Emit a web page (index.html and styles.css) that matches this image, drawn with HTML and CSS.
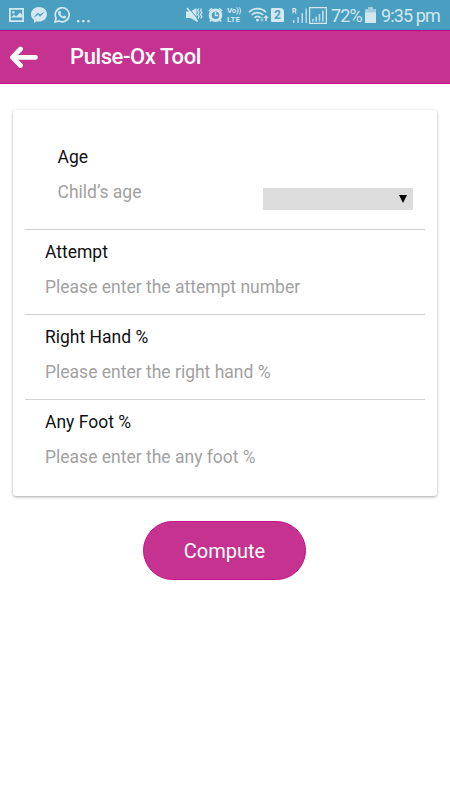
FILE: index.html
```html
<!DOCTYPE html>
<html lang="en">
	<head>
		<meta charset="UTF-8">
		<title>Pulse-Ox Tool</title>
		<link rel="stylesheet" href="styles.css">
	</head>
	<body>
		<div class="status">
			<div class="status-left">
				<svg width="15" height="14" viewBox="0 0 15 14"><path fill="currentColor" fill-rule="evenodd" d="M0 0h15v14H0zM1.8 1.800v10.400h11.400V1.800z"/><path fill="currentColor" d="M2 9.500l3-3 2 2 4-4 2.500 2.500V9.500z"/><circle cx="4.3" cy="4.2" r="1.3" fill="currentColor"/></svg>
				<svg width="16" height="16" viewBox="0 0 16 16"><path fill="currentColor" d="M8 0c4.500 0 8 3.200 8 7.300s-3.500 7.300-8 7.300c-.8 0-1.600-.1-2.300-.3L3 15.800V13C1.200 11.700 0 9.600 0 7.300 0 3.200 3.500 0 8 0z"/><path d="M3.500 9.700L7 6l2 2 3.500-2.500L9.200 9.300l-2.100-2z" fill="#4a9ebf" stroke="#4a9ebf" stroke-width=".7"/></svg>
				<svg width="16" height="16" viewBox="0 0 16 16"><path fill="none" stroke="currentColor" stroke-width="1.700" d="M1 15l1.100-3.800A7 7 0 1 1 5 14z"/><path fill="currentColor" d="M5 4l1.300-.1.900 2.100-.8 1.100c.6 1.100 1.400 1.800 2.600 2.400l1.100-1.100 2 1c0 1.500-1.200 2.300-2.500 2.100C6.800 11 4.500 8.700 4 6.300 3.900 5.300 4.300 4.500 5 4z"/></svg>
				<svg class="dots" width="13" height="3" viewBox="0 0 13 3"><path fill="currentColor" d="M0 0h2.300v2.300H0zM5.200 0h2.300v2.300H5.200zM10.400 0h2.300v2.300h-2.300z"/></svg>
			</div>
			<div class="status-right">
				<svg width="17" height="16" viewBox="0 0 17 16"><path fill="currentColor" d="M0 4.500h4.500l6-3.500v13.500l-6-3.500H0z"/><path d="M2 .2l11 13" stroke="#4a9ebf" stroke-width="1"/><path d="M1 1l10.500 13.500" fill="none" stroke="currentColor" stroke-width="1.600"/><path d="M12.700 1.500l-1 2 1.300 2-1.300 2 1.300 2-1 2M15.500 1.500l-1 2 1.300 2-1.300 2 1.300 2-1 2" fill="none" stroke="currentColor" stroke-width="1.300"/></svg>
				<svg class="alarm" width="15" height="16" viewBox="0 0 15 16"><circle cx="7.500" cy="8.200" r="5.300" fill="none" stroke="currentColor" stroke-width="3"/><path d="M.8 4L4 1.200M14.200 4L11 1.200M3.500 12.500l-1.700 2M11.500 12.500l1.700 2M7.500 4.700V8.500h2.800" fill="none" stroke="currentColor" stroke-width="1.500"/></svg>
				<div class="volte"><span class="vo">Vo))</span><span>LTE</span></div>
				<svg class="wifi" width="21" height="16" viewBox="0 0 21 16"><path d="M1 5.200c4.700-4.800 12.300-4.800 17 0M3.700 8c3.300-3.200 8.300-3.200 11.600 0M6.500 10.700c1.800-1.600 4.200-1.600 6 0" fill="none" stroke="currentColor" stroke-width="1.700"/><circle cx="9.500" cy="13.200" r="1.400" fill="currentColor"/><path fill="currentColor" d="M18 8l2.700 3h-1.900v3h-1.600v-3h-1.900z"/><path fill="currentColor" opacity=".6" d="M14 15l-2-2.500h1.300V10h1.400v2.500H16z"/></svg>
				<div class="sim">2</div>
				<svg class="roaming" width="16" height="16" viewBox="0 0 16 16"><path d="M1 6.500V1.600h1.700a1.200 1.200 0 0 1 0 2.500H1M2.700 4l1.500 2.500" fill="none" stroke="currentColor" stroke-width="1.200"/><path fill="currentColor" opacity=".8" d="M1 13h1.500v3H1zM5.300 10h1.500v6H5.300zM9.500 6H11v10H9.500zM13.500 1.500H15V16h-1.500z"/></svg>
				<svg class="signal" width="18" height="17" viewBox="0 0 18 17"><path d="M.6.600h16.800v15.800H.6z" fill="none" stroke="currentColor" stroke-width="1.200"/><path fill="currentColor" opacity=".8" d="M3 12h1.700v2.500H3zM6.300 9.800H8v4.700H6.300zM9.600 7h1.700v7.500H9.600zM13 3.500h1.700v11H13z"/></svg>
				<span class="percent">72%</span>
				<svg class="battery" width="11" height="16" viewBox="0 0 11 16"><path fill="currentColor" opacity=".65" d="M3 0h5v2h3v4H0V2h3z"/><path fill="currentColor" d="M0 5.500h11V16H0z"/></svg>
				<span class="clock">9:35 pm</span>
			</div>
		</div>
		<div class="header">
			<svg width="29" height="23" viewBox="0 0 29 23"><path d="M10.500 3L2.500 11.300l8 8.200M3.500 11.300H25.500" fill="none" stroke="#fff" stroke-width="4.800" stroke-linecap="round" stroke-linejoin="round"/></svg>
			<h1>Pulse-Ox Tool</h1>
		</div>
		<div class="card">
			<div class="row age">
				<div>
					<div class="label">Age</div>
					<div class="hint">Child’s age</div>
				</div>
				<div class="select"><svg width="8" height="8" viewBox="0 0 8 8"><path d="M0 0h8L4 8z"/></svg></div>
			</div>
			<div class="row">
				<div class="label">Attempt</div>
				<div class="hint">Please enter the attempt number</div>
			</div>
			<div class="row">
				<div class="label">Right Hand %</div>
				<div class="hint">Please enter the right hand %</div>
			</div>
			<div class="row">
				<div class="label">Any Foot %</div>
				<div class="hint">Please enter the any foot %</div>
			</div>
		</div>
		<button class="compute">Compute</button>
	</body>
</html>
```

FILE: styles.css
```css
* {
box-sizing: border-box;
}
body {
margin: 0;
font-family: Roboto, "Liberation Sans", sans-serif;
background-color: #fff;
}
svg {
display: block;
flex: none;
}
.status {
display: flex;
justify-content: space-between;
height: 30px;
padding: 1px 10px 0 9px;
background-color: #4a9ebf;
color: #d3e8f1;
border-bottom: 1px solid #2c9bc0;
}
.status-left, .status-right {
display: flex;
align-items: center;
}
.status-left {
gap: 7px;
}
.status-left .dots {
margin-top: 12px;
}
.alarm {
margin-left: 5px;
}
.volte {
display: flex;
flex-direction: column;
width: 16px;
margin-left: 4px;
font-size: 8px;
line-height: 9.5px;
font-weight: 700;
white-space: nowrap;
}
.vo {
letter-spacing: -0.3px;
}
.wifi {
margin-left: 5px;
}
.sim {
width: 13px;
height: 14px;
margin-left: 2px;
border-radius: 1px 4px 1px 1px;
background-color: #d3e8f1;
color: #4a9ebf;
font-size: 12px;
line-height: 14px;
font-weight: 700;
text-align: center;
}
.roaming {
margin-left: 8px;
}
.signal {
margin-left: 1px;
}
.percent {
width: 30px;
margin-left: 4px;
font-size: 18px;
letter-spacing: -0.9px;
}
.battery {
margin-left: 4px;
}
.clock {
width: 59px;
margin-left: 5px;
font-size: 18px;
letter-spacing: -0.9px;
white-space: nowrap;
}
.header {
display: flex;
align-items: center;
height: 54px;
padding-left: 10px;
background-color: #c5328f;
border-top: 1px solid #c4008a;
border-bottom: 1px solid #c4008a;
}
.header svg {
margin-top: 1px;
}
.header h1 {
margin: -1px 0 0 31px;
color: #fff;
font-size: 22px;
font-weight: 500;
letter-spacing: -0.4px;
}
.card {
height: 386px;
margin: 26px 13px 0;
padding: 25px 12px 0;
border-radius: 3px;
background-color: #fff;
box-shadow: 0 1px 3px rgba(0, 0, 0, 0.35);
}
.row {
height: 85px;
padding: 9px 20px 0;
border-bottom: 1px solid #d3d3d3;
}
.row:last-child {
border-bottom: none;
}
.age {
display: flex;
justify-content: space-between;
height: 95px;
padding: 9px 12.500px 0 32.500px;
}
.label, .hint {
height: 35px;
font-size: 17.5px;
line-height: 26px;
white-space: nowrap;
}
.label {
color: #111;
}
.hint {
color: #a1a1a1;
}
.select {
display: flex;
align-items: center;
justify-content: flex-end;
width: 150px;
height: 22px;
margin-top: 44px;
padding-right: 6px;
background-color: #dcdcdc;
}
.compute {
display: block;
width: 163px;
height: 59px;
margin: 25px 0 0 143px;
padding: 0;
border: 1px solid #c4108a;
border-radius: 30px;
background-color: #c5328f;
color: #fff;
font-family: inherit;
font-size: 20px;
}
```
